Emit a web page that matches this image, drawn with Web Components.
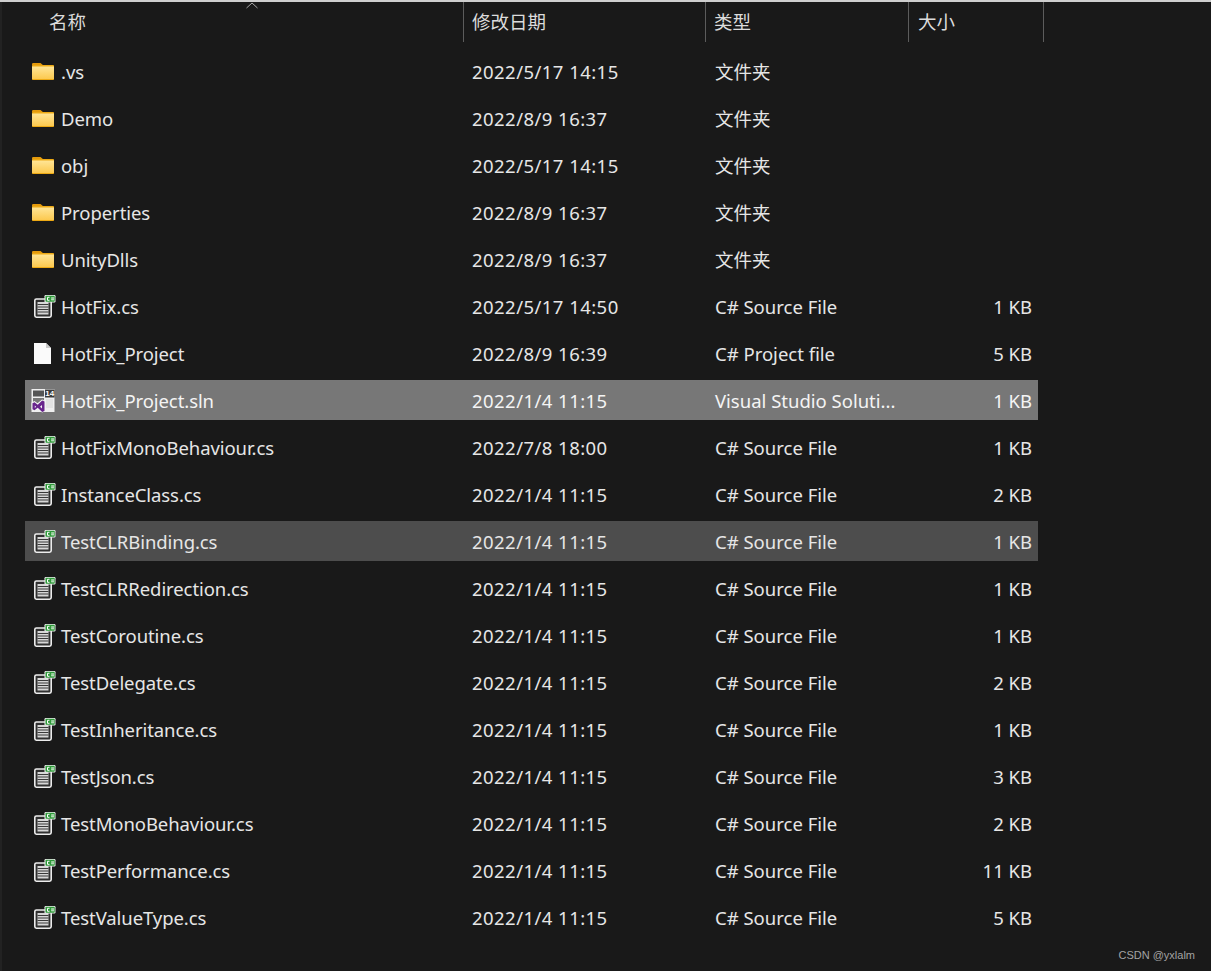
<!DOCTYPE html>
<html lang="zh">
<head>
<meta charset="utf-8">
<title>HotFix_Project</title>
<style>
  html, body { margin: 0; height: 100%; }
  body { background: linear-gradient(90deg, #222 2px, #191919 2px);
    font-family: "Noto Sans", "Noto Sans CJK SC", sans-serif; overflow: hidden; }
</style>
</head>
<body>
<template id="icon-folder">
  <svg width="26" height="26" viewBox="0 0 26 26">
    <defs><linearGradient id="fg" x1="0" y1="0" x2="0" y2="1"><stop offset="0" stop-color="#ffe596"/><stop offset="1" stop-color="#fcc94f"/></linearGradient></defs>
    <path d="M1 5.200Q1 4 2.200 4H9.500l3 2.500H1z" fill="#e49a0c"/>
    <rect x="1" y="6" width="22" height="15" rx=".8" fill="#eda914"/>
    <rect x="1" y="7.500" width="22" height="12.500" fill="url(#fg)"/>
  </svg>
</template>
<template id="icon-cs">
  <svg width="26" height="26" viewBox="0 0 26 26">
    <rect x="3.800" y="5" width="16.400" height="18.200" rx="1.600" fill="#303030" stroke="#ececec" stroke-width="1.600"/>
    <rect x="6.500" y="8" width="11" height="12.500" fill="#d6d6d6"/>
    <path d="M6.500 10.500h11M6.500 13h11M6.500 15.500h11M6.500 18h11" stroke="#3a3a3a" stroke-width="1"/>
    <rect x="13.500" y="1" width="11" height="7.500" rx="1.200" fill="#ececec"/>
    <rect x="14.500" y="1.800" width="9.200" height="6" rx=".8" fill="#2f9a3a"/>
    <path d="M18.500 3.300h-2v3h2" fill="none" stroke="#fff" stroke-width="1"/>
    <path d="M20 4h3M20 5.600h3M21 3v3.600M22.200 3v3.600" stroke="#e6f6e6" stroke-width=".6"/>
  </svg>
</template>
<template id="icon-blank">
  <svg width="26" height="26" viewBox="0 0 26 26">
    <path d="M3 2h12l5 5v16H3z" fill="#fafafa"/>
    <path d="M15 2v5h5z" fill="#c9c9c9"/>
  </svg>
</template>
<template id="icon-sln">
  <svg width="26" height="26" viewBox="0 0 26 26">
    <rect x="0.500" y="1" width="23" height="23" fill="#efefef"/>
    <rect x="2" y="2.500" width="11" height="6" fill="#555"/>
    <rect x="2" y="10" width="11" height="5" fill="#777"/>
    <rect x="15" y="11" width="7" height="9" fill="#e2e2e2"/>
    <rect x="14" y="1.500" width="9.500" height="8" fill="#3a3a3a"/>
    <text x="18.800" y="8" font-family="Liberation Sans" font-size="8" font-weight="700" fill="#fff" text-anchor="middle">14</text>
    <path d="M.5 14.500l3-1.500 3 2.300 4.500-3.800 3.500 1.500v10L11 24.500l-4.500-3.800-3 2.300-3-1.500z" fill="#f4f4f4"/>
    <path d="M1.500 15.200l2-1 3.200 2.500 4.500-4.100 2.300 1v9.300l-2.300 1-4.500-4.100-3.200 2.500-2-1zM3.800 17.500v2.600l1.300-1.300zM9 18.800l2 1.700v-3.400z" fill="#68248c" fill-rule="evenodd"/>
  </svg>
</template>

<template id="header-tpl">
  <style>
    :host { display: grid; grid-template-columns: 464px 242px 203px 135px; height: 40px; width: 1044px;
      font-size: 18.500px; color: #dcdcdc; }
    .c { display: flex; align-items: center; border-right: 1px solid #5c5c5c; padding-left: 8px; box-sizing: border-box; padding-bottom: 2px; }
    .first { padding-left: 49px; position: relative; }
    .last { padding-left: 9px; }
    .sort { position: absolute; left: 246px; top: 0; }
  </style>
  <div class="c first"><span>名称</span>
    <svg class="sort" width="12" height="7" viewBox="0 0 12 7"><path d="M.5 6L6 1l5.500 5" fill="none" stroke="#a8a8a8"/></svg>
  </div>
  <div class="c">修改日期</div>
  <div class="c">类型</div>
  <div class="c last">大小</div>
</template>

<template id="row-tpl">
  <style>
    :host { display: grid; grid-template-columns: 36px 411px 243px 1fr 80px; align-items: center; height: 40px; width: 1013px;
      font-size: 18.500px; color: #e6e6e6; box-sizing: border-box; }
    :host([state="selected"]) { background: #777; color: #f4f4f4; }
    :host([state="hover"]) { background: #4d4d4d; }
    .icon { display: flex; padding: 2px 0 0 6px; }
    .name { letter-spacing: -.08px; white-space: nowrap; }
    .date { letter-spacing: .45px; white-space: nowrap; }
    .type { white-space: nowrap; }
    .size { text-align: right; padding-right: 6px; }
  </style>
  <div class="icon"></div>
  <div class="name"></div>
  <div class="date"></div>
  <div class="type"></div>
  <div class="size"></div>
</template>

<template id="list-tpl">
  <style>
    :host { display: block; border-top: 2px solid #cfcfcf; }
    .rows { display: flex; flex-direction: column; gap: 7px; padding: 9px 0 0 25px; }
  </style>
  <file-header></file-header>
  <div class="rows"><slot></slot></div>
</template>

<template id="mark-tpl">
  <style>
    :host { display: block; text-align: right; padding-right: 16px; margin-top: 12px;
      font: 11px "Liberation Sans", sans-serif; color: #a3a3a3; }
  </style>
  <slot></slot>
</template>

<file-list id="list"></file-list>
<page-mark>CSDN @yxlalm</page-mark>

<script>
  function tpl(id) {
    return document.getElementById(id).content.cloneNode(true);
  }

  class FileHeader extends HTMLElement {
    constructor() {
      super();
      this.attachShadow({ mode: "open" }).appendChild(tpl("header-tpl"));
    }
  }

  class FileRow extends HTMLElement {
    constructor() {
      super();
      this.attachShadow({ mode: "open" }).appendChild(tpl("row-tpl"));
    }
    connectedCallback() {
      const s = this.shadowRoot;
      s.querySelector(".icon").appendChild(tpl("icon-" + this.getAttribute("icon")));
      s.querySelector(".name").textContent = this.getAttribute("name");
      s.querySelector(".date").textContent = this.getAttribute("date");
      s.querySelector(".type").textContent = this.getAttribute("type");
      s.querySelector(".size").textContent = this.getAttribute("size") || "";
    }
  }

  class FileList extends HTMLElement {
    constructor() {
      super();
      this.attachShadow({ mode: "open" }).appendChild(tpl("list-tpl"));
    }
  }

  class PageMark extends HTMLElement {
    constructor() {
      super();
      this.attachShadow({ mode: "open" }).appendChild(tpl("mark-tpl"));
    }
  }

  customElements.define("file-header", FileHeader);
  customElements.define("file-row", FileRow);
  customElements.define("file-list", FileList);
  customElements.define("page-mark", PageMark);

  const FOLDER = "文件夹", CS = "C# Source File";
  const files = [
    ["folder", ".vs", "2022/5/17 14:15", FOLDER, ""],
    ["folder", "Demo", "2022/8/9 16:37", FOLDER, ""],
    ["folder", "obj", "2022/5/17 14:15", FOLDER, ""],
    ["folder", "Properties", "2022/8/9 16:37", FOLDER, ""],
    ["folder", "UnityDlls", "2022/8/9 16:37", FOLDER, ""],
    ["cs", "HotFix.cs", "2022/5/17 14:50", CS, "1 KB"],
    ["blank", "HotFix_Project", "2022/8/9 16:39", "C# Project file", "5 KB"],
    ["sln", "HotFix_Project.sln", "2022/1/4 11:15", "Visual Studio Soluti...", "1 KB", "selected"],
    ["cs", "HotFixMonoBehaviour.cs", "2022/7/8 18:00", CS, "1 KB"],
    ["cs", "InstanceClass.cs", "2022/1/4 11:15", CS, "2 KB"],
    ["cs", "TestCLRBinding.cs", "2022/1/4 11:15", CS, "1 KB", "hover"],
    ["cs", "TestCLRRedirection.cs", "2022/1/4 11:15", CS, "1 KB"],
    ["cs", "TestCoroutine.cs", "2022/1/4 11:15", CS, "1 KB"],
    ["cs", "TestDelegate.cs", "2022/1/4 11:15", CS, "2 KB"],
    ["cs", "TestInheritance.cs", "2022/1/4 11:15", CS, "1 KB"],
    ["cs", "TestJson.cs", "2022/1/4 11:15", CS, "3 KB"],
    ["cs", "TestMonoBehaviour.cs", "2022/1/4 11:15", CS, "2 KB"],
    ["cs", "TestPerformance.cs", "2022/1/4 11:15", CS, "11 KB"],
    ["cs", "TestValueType.cs", "2022/1/4 11:15", CS, "5 KB"]
  ];
  const list = document.getElementById("list");
  for (const [icon, name, date, type, size, state] of files) {
    const row = document.createElement("file-row");
    row.setAttribute("icon", icon);
    row.setAttribute("name", name);
    row.setAttribute("date", date);
    row.setAttribute("type", type);
    row.setAttribute("size", size);
    if (state) row.setAttribute("state", state);
    list.appendChild(row);
  }
</script>
</body>
</html>
